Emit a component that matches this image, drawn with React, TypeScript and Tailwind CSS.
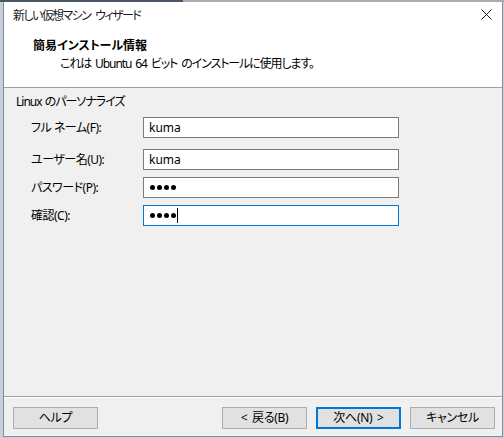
import React from "react";

const font = "font-['Noto_Sans','Noto_Sans_CJK_JP',sans-serif] [font-feature-settings:'palt']";

function Row({ label, children, mt }: { label: string; children: React.ReactNode; mt: string }) {
  return (
    <div className={`flex items-center ${mt}`}>
      <div className="w-[139px] pl-[27px] text-[12px] leading-[16px] tracking-[-0.5px] text-black">{label}</div>
      {children}
    </div>
  );
}

function Btn({ children, primary }: { children: React.ReactNode; primary?: boolean }) {
  return (
    <div
      className={`flex h-[22px] items-center justify-center bg-[#e1e1e1] text-[12px] leading-[16px] tracking-[-0.3px] [word-spacing:2px] text-black ${
        primary ? "w-[85px] border-2 border-[#0078d7]" : "w-[85px] border border-[#adadad]"
      }`}
    >
      {children}
    </div>
  );
}

function Dots({ cursor }: { cursor?: boolean }) {
  return (
    <>
      {[0, 1, 2, 3].map((i) => (
        <span key={i} className="block h-[5px] w-[5px] rounded-full bg-black" />
      ))}
      {cursor ? <span className="-ml-[1px] block h-[15px] w-px bg-black" /> : null}
    </>
  );
}

export default function App() {
  return (
    <div className={`relative flex h-[438px] w-[504px] flex-col overflow-hidden bg-[#c4d0de] ${font}`}>
      <div className="flex h-[2px] w-full">
        <div className="h-full w-[183px] bg-[#4b5667]" />
        <div className="h-full flex-1 bg-[#a9adb3]" />
      </div>
      <div className="ml-[3px] flex h-[435px] w-[500px] flex-col border-x border-b border-[#8c8c8c] bg-[#f0f0f0]">
        {/* title bar */}
        <div className="flex h-[28px] items-center justify-between bg-white pl-[9px] pr-[10px]">
          <span className="text-[12px] leading-[16px] tracking-[-1.6px] text-[#1a1a1a]">
            新しい仮想マシン<span className="inline-block w-[5px]" />ウィザード
          </span>
          <svg width="11" height="11" viewBox="0 0 11 11" className="mb-[3px]">
            <path d="M0.5 0.5 L10.5 10.5 M10.5 0.5 L0.5 10.5" stroke="#1a1a1a" strokeWidth="1" fill="none" />
          </svg>
        </div>
        {/* header */}
        <div className="flex h-[57px] flex-col bg-white pt-[8px]">
          <div className="flex">
            <div className="w-[29px] shrink-0" />
            <div className="text-[12px] font-bold leading-[16px] text-black">簡易インストール情報</div>
          </div>
          <div className="mt-[2px] flex">
            <div className="w-[56px] shrink-0" />
            <div className="text-[12px] leading-[16px] tracking-[-1.1px] [word-spacing:2px] text-black">
              これは Ubuntu 64 ビット のインストールに使用します。
            </div>
          </div>
        </div>
        <div className="h-px bg-[#a0a0a0]" />
        {/* body */}
        <div className="flex h-[308px] flex-col pt-[6px]">
          <div className="pl-[12px] text-[12px] leading-[16px] tracking-[-1px] [word-spacing:1px] text-black">Linux のパーソナライズ</div>
          <Row label="フル ネーム(F):" mt="mt-[7px]">
            <div className="flex h-[21px] w-[256px] items-center border border-[#7a7a7a] bg-white pl-[5px] text-[12px] text-black">
              kuma
            </div>
          </Row>
          <Row label="ユーザー名(U):" mt="mt-[11px]">
            <div className="flex h-[21px] w-[256px] items-center border border-[#7a7a7a] bg-white pl-[5px] text-[12px] text-black">
              kuma
            </div>
          </Row>
          <Row label="パスワード(P):" mt="mt-[7px]">
            <div className="flex h-[21px] w-[256px] items-center gap-[2px] border border-[#7a7a7a] bg-white pl-[6px]">
              <Dots />
            </div>
          </Row>
          <Row label="確認(C):" mt="mt-[7px]">
            <div className="flex h-[21px] w-[256px] items-center gap-[2px] border border-[#0078d7] bg-white pl-[6px]">
              <Dots cursor />
            </div>
          </Row>
        </div>
        <div className="h-px bg-[#a0a0a0]" />
        <div className="h-px bg-white" />
        {/* footer */}
        <div className="flex flex-1 items-start pl-[9px] pr-[7px] pt-[9px]">
          <Btn>ヘルプ</Btn>
          <div className="flex-1" />
          <div className="flex gap-[9px]">
            <Btn>&lt; 戻る(B)</Btn>
            <Btn primary>次へ(N) &gt;</Btn>
            <Btn>キャンセル</Btn>
          </div>
        </div>
      </div>
    </div>
  );
}
